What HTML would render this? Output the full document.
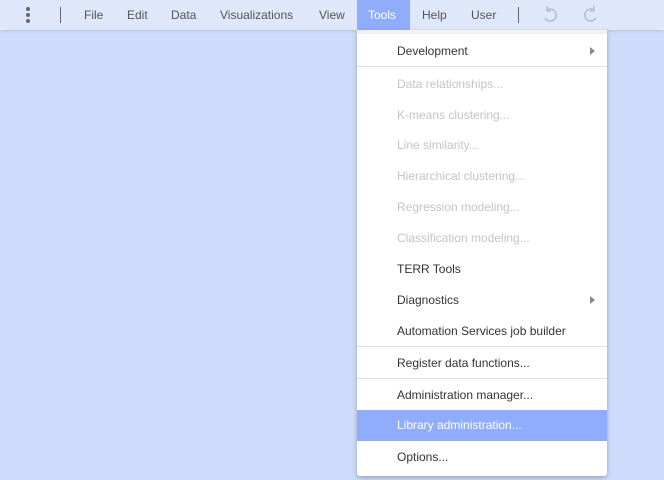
<!DOCTYPE html>
<html><head><style>
body{margin:0;width:664px;height:480px;background:#cddcfb;font-family:"Liberation Sans",Roboto,sans-serif;font-size:12px;position:relative;overflow:hidden;color:#333}
.bar{position:absolute;left:0;top:0;width:664px;height:30px;background:#dfe7fb;box-shadow:0 1px 3px rgba(0,0,0,.12)}
.bar span{position:absolute;top:8px;color:#555}
.sep{position:absolute;top:7px;width:1px;height:16px;background:#666}
.tools{position:absolute;left:357px;top:0;width:53px;height:30px;background:#8fadfc}
.menu{position:absolute;left:357px;top:30px;width:250px;height:446px;background:#fff;border-radius:0 0 3px 3px;box-shadow:0 2px 5px rgba(0,0,0,.25);border-top:4px solid #f1f1f1;box-sizing:border-box}
.it{position:absolute;left:0;width:250px;height:31px;line-height:31px;padding-left:40px;box-sizing:border-box;color:#333}
.dis{color:#c4c4c4}
.hl{background:#8fadfc;color:#fff}
.hr{position:absolute;left:0;width:250px;height:1px;background:#e2e2e2}
.arr{position:absolute;right:12px;top:11px;width:0;height:0;border-left:5px solid #888;border-top:4px solid transparent;border-bottom:4px solid transparent}
.dot{position:absolute;left:26px;width:4px;height:4px;border-radius:2px;background:#666}
</style></head><body>
<div class="bar">
<div class="dot" style="top:7px"></div><div class="dot" style="top:13px"></div><div class="dot" style="top:19px"></div>
<div class="sep" style="left:60px"></div>
<span style="left:84px">File</span><span style="left:127px">Edit</span><span style="left:171px">Data</span><span style="left:220px">Visualizations</span><span style="left:319px">View</span>
<div class="tools"></div><span style="left:368px;color:#fff">Tools</span>
<span style="left:422px">Help</span><span style="left:471px">User</span>
<div class="sep" style="left:518px"></div>
<svg style="position:absolute;left:541px;top:5px" width="18" height="20" viewBox="0 0 18 20"><path d="M6 5 A6 6 0 1 1 4 13" fill="none" stroke="#b5bdcc" stroke-width="1.5"/><path d="M6 1 L6 6 L10 6" fill="none" stroke="#b5bdcc" stroke-width="1.5"/></svg>
<svg style="position:absolute;left:582px;top:5px" width="18" height="20" viewBox="0 0 18 20"><path d="M12 5 A6 6 0 1 0 14 13" fill="none" stroke="#b5bdcc" stroke-width="1.5"/><path d="M12 1 L12 6 L8 6" fill="none" stroke="#b5bdcc" stroke-width="1.5"/></svg>
</div>
<div class="menu">
<div class="it" style="top:2px">Development<div class="arr"></div></div>
<div class="hr" style="top:32px"></div>
<div class="it dis" style="top:35px">Data relationships...</div>
<div class="it dis" style="top:66px">K-means clustering...</div>
<div class="it dis" style="top:96px">Line similarity...</div>
<div class="it dis" style="top:127px">Hierarchical clustering...</div>
<div class="it dis" style="top:158px">Regression modeling...</div>
<div class="it dis" style="top:189px">Classification modeling...</div>
<div class="it" style="top:220px">TERR Tools</div>
<div class="it" style="top:251px">Diagnostics<div class="arr"></div></div>
<div class="it" style="top:282px">Automation Services job builder</div>
<div class="hr" style="top:312px"></div>
<div class="it" style="top:314px">Register data functions...</div>
<div class="hr" style="top:344px"></div>
<div class="it" style="top:346px">Administration manager...</div>
<div class="it hl" style="top:376px">Library administration...</div>
<div class="it" style="top:408px">Options...</div>
</div>
</body></html>
